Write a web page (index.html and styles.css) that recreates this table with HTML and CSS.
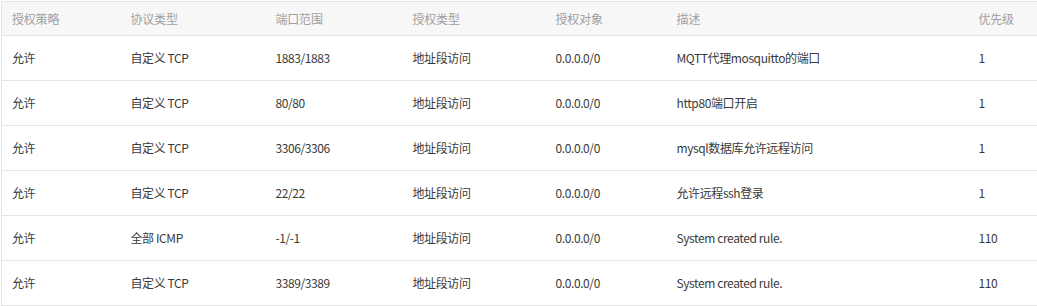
FILE: index.html
```html
<!DOCTYPE html>
<html lang="zh-CN">
<head>
<meta charset="utf-8">
<title>安全组规则</title>
<link rel="stylesheet" href="styles.css">
</head>
<body>
<div class="wrap">
<table class="rules">
  <colgroup>
    <col class="c1"><col class="c2"><col class="c3"><col class="c4"><col class="c5"><col class="c6"><col class="c7">
  </colgroup>
  <thead>
    <tr><th>授权策略</th><th>协议类型</th><th>端口范围</th><th>授权类型</th><th>授权对象</th><th>描述</th><th>优先级</th></tr>
  </thead>
  <tbody>
    <tr><td>允许</td><td>自定义 TCP</td><td>1883/1883</td><td>地址段访问</td><td>0.0.0.0/0</td><td>MQTT代理mosquitto的端口</td><td>1</td></tr>
    <tr><td>允许</td><td>自定义 TCP</td><td>80/80</td><td>地址段访问</td><td>0.0.0.0/0</td><td>http80端口开启</td><td>1</td></tr>
    <tr><td>允许</td><td>自定义 TCP</td><td>3306/3306</td><td>地址段访问</td><td>0.0.0.0/0</td><td>mysql数据库允许远程访问</td><td>1</td></tr>
    <tr><td>允许</td><td>自定义 TCP</td><td>22/22</td><td>地址段访问</td><td>0.0.0.0/0</td><td>允许远程ssh登录</td><td>1</td></tr>
    <tr><td>允许</td><td>全部 ICMP</td><td>-1/-1</td><td>地址段访问</td><td>0.0.0.0/0</td><td>System created rule.</td><td>110</td></tr>
    <tr><td>允许</td><td>自定义 TCP</td><td>3389/3389</td><td>地址段访问</td><td>0.0.0.0/0</td><td>System created rule.</td><td>110</td></tr>
  </tbody>
</table>
</div>
</body>
</html>
```
FILE: styles.css
```css
html, body {
  margin: 0;
  padding: 0;
  background: #fff;
  overflow: hidden;
}
.wrap {
  padding: 1px 0 0 1px;
  width: 1060px;
}
.rules {
  border-collapse: collapse;
  table-layout: fixed;
  width: 1059px;
  font-family: "Noto Sans CJK SC", "Liberation Sans", sans-serif;
  font-size: 12px;
  color: #3a3a3a;
  border: 1px solid #e5e5e5;
}
.c1 { width: 119px; }
.c2 { width: 145px; }
.c3 { width: 137px; }
.c4 { width: 143px; }
.c5 { width: 121px; }
.c6 { width: 302px; }
.c7 { width: 92px; }
.rules th {
  height: 32px;
  padding: 0 0 1px 10px;
  text-align: left;
  font-weight: normal;
  color: #a0a0a0;
  background: #f7f7f8;
  border-bottom: 1px solid #e5e5e5;
  letter-spacing: -0.2px;
}
.rules td {
  height: 42px;
  padding: 0 0 2px 10px;
  text-align: left;
  border-bottom: 1px solid #e5e5e5;
  white-space: nowrap;
  letter-spacing: -0.4px;
}
```
